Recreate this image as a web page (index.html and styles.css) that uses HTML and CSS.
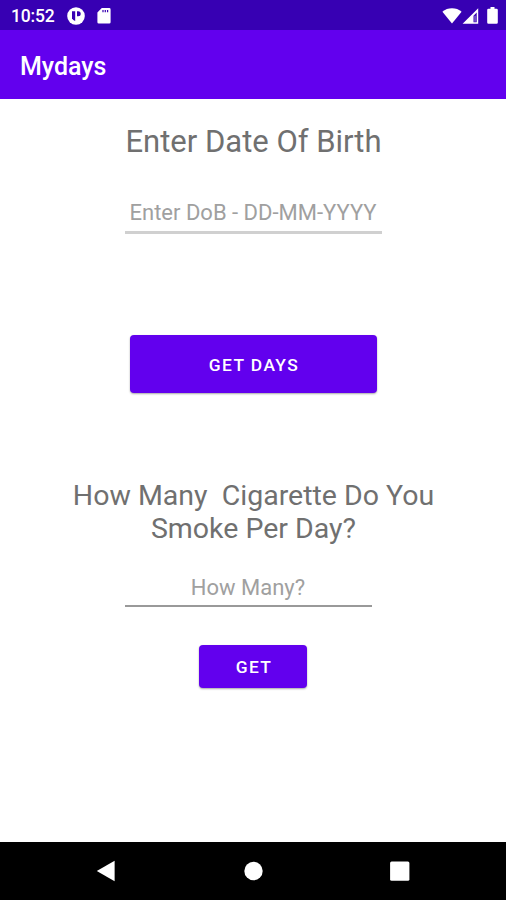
FILE: index.html
```html
<!DOCTYPE html>
<html lang="en">
<head>
    <meta charset="UTF-8">
    <meta name="viewport" content="width=device-width, initial-scale=1.0">
    <title>Mydays</title>
    <link rel="stylesheet" href="styles.css">
</head>
<body>

    <!-- Status bar -->
    <div class="status-bar">
        <span class="status-time">10:52</span>
        <svg class="icon-app" width="18" height="18" viewBox="0 0 18 18">
            <circle cx="9" cy="9" r="8.8" fill="#fff"/>
            <path d="M5 4.200h3.200v9.800a5 5 0 0 1-3.200-2.400z" fill="#3700b3"/>
            <path d="M10 4.200h1.200a2.500 2.500 0 0 1 0 5H10z" fill="#3700b3"/>
        </svg>
        <svg class="icon-card" width="14" height="16" viewBox="0 0 14 16">
            <path d="M4.800 0h7.400A1.400 1.400 0 0 1 13.600 1.400v12.800a1.400 1.400 0 0 1-1.400 1.400H1.800a1.400 1.400 0 0 1-1.400-1.400V4.600z" fill="#fff"/>
            <path d="M6 2v2.200M8.300 2v2.200M10.600 2v2.200" stroke="#3700b3" stroke-width="1.200"/>
        </svg>
        <div class="status-right">
            <svg width="20" height="16" viewBox="0 0 20 16">
                <path d="M.4 3.800C5.600-.8 14.400-.8 19.600 3.800L10 15.600z" fill="#fff"/>
            </svg>
            <svg width="17" height="16" viewBox="0 0 17 16">
                <path d="M.6 15.800L16.200.2v15.600zM11.500 14.300h3.200V4.600l-3.200 3.200z" fill="#fff" fill-rule="evenodd"/>
                <path d="M12.300 7.800h1.500v6h-1.500z" fill="#fff" opacity=".4"/>
            </svg>
            <svg class="icon-battery" width="11" height="17" viewBox="0 0 11 17">
                <path d="M3.500 0h4v1.700h2a1.300 1.300 0 0 1 1.300 1.300v12.400a1.300 1.300 0 0 1-1.300 1.300h-8A1.300 1.300 0 0 1 .2 15.400V3a1.300 1.300 0 0 1 1.300-1.300h2z" fill="#fff"/>
            </svg>
        </div>
    </div>

    <header class="app-bar">
        <h1>Mydays</h1>
    </header>

    <main class="content">
        <h2 class="dob-title">Enter Date Of Birth</h2>
        <input class="dob-input" type="text" placeholder="Enter DoB - DD-MM-YYYY">
        <button class="btn btn-days">GET DAYS</button>

        <h2 class="smoke-title">How Many&nbsp; Cigarette Do You<br>Smoke Per Day?</h2>
        <input class="smoke-input" type="text" placeholder="How Many?">
        <button class="btn btn-get">GET</button>
    </main>

    <!-- Navigation bar -->
    <nav class="nav-bar">
        <svg width="20" height="22" viewBox="0 0 20 22">
            <path d="M.8 11L18.600 .8v20.400z" fill="#fff"/>
        </svg>
        <svg width="20" height="22" viewBox="0 0 20 22">
            <circle cx="10.500" cy="11" r="9.200" fill="#fff"/>
        </svg>
        <svg width="20" height="22" viewBox="0 0 20 22">
            <rect x=".1" y="1.500" width="19.300" height="19.300" rx="1.500" fill="#fff"/>
        </svg>
    </nav>

</body>
</html>
```
FILE: styles.css
```css
* {
    box-sizing: border-box;
}
body {
    font-family: Roboto, "Liberation Sans", sans-serif;
    background-color: #fff;
    margin: 0;
    height: 100vh;
    display: flex;
    flex-direction: column;
    overflow: hidden;
}
svg {
    display: block;
}
.status-bar {
    height: 30px;
    padding: 1px 8px 0 11px;
    display: flex;
    align-items: center;
    background-color: #3700b3;
    color: #fff;
}
.status-time {
    width: 56px;
    font-size: 17.5px;
    font-weight: 500;
    letter-spacing: -.2px;
}
.icon-card {
    margin-left: 12px;
}
.status-right {
    display: flex;
    align-items: center;
    margin-left: auto;
}
.icon-battery {
    margin-left: 8px;
}
.app-bar {
    height: 69px;
    padding: 3px 20px 0;
    display: flex;
    align-items: center;
    background-color: #6200ee;
    color: #fff;
}
.app-bar h1 {
    margin: 0;
    font-size: 25px;
    font-weight: 500;
}
.content {
    flex: 1;
    display: flex;
    flex-direction: column;
    align-items: center;
}
.content h2 {
    margin: 0;
    font-weight: 400;
    text-align: center;
    color: #707070;
}
.content .dob-title {
    margin-top: 25px;
    padding-left: 1px;
    font-size: 31px;
    line-height: 36px;
}
.content .smoke-title {
    margin-top: 86px;
    padding-left: 1px;
    font-size: 28.5px;
    line-height: 33px;
}
input {
    font-family: inherit;
    font-size: 22px;
    text-align: center;
    padding: 0;
    border: none;
    outline: none;
    background: none;
}
input::placeholder {
    color: #a0a0a0;
    opacity: 1;
}
.dob-input {
    width: 257px;
    height: 44px;
    margin-top: 30px;
    padding-top: 4px;
    border-bottom: 3px solid #d0d0d0;
}
.smoke-input {
    width: 247px;
    height: 40px;
    margin: 22px 10px 0 0;
    padding-top: 3px;
    border-bottom: 2px solid #999;
}
.btn {
    font-family: inherit;
    font-weight: 500;
    font-size: 17.4px;
    letter-spacing: 1.4px;
    padding: 1px 0 0 2px;
    border: none;
    border-radius: 4px;
    background-color: #6200ee;
    color: #fff;
    box-shadow: 0 1px 2px rgba(0, 0, 0, .35);
}
.btn-days {
    width: 247px;
    height: 58px;
    margin-top: 101px;
}
.btn-get {
    width: 108px;
    height: 43px;
    margin-top: 38px;
}
.nav-bar {
    height: 58px;
    padding: 0 96px;
    display: flex;
    align-items: center;
    justify-content: space-between;
    background-color: #000;
}
```
